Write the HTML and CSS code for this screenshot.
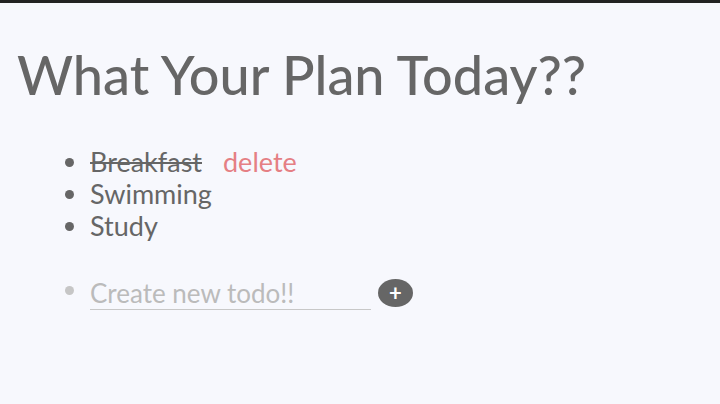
FILE: index.html
```html
<!DOCTYPE html>
<html>
<head>
<meta charset="utf-8">
<link rel="stylesheet" href="styles.css">
</head>
<body>
<div class="topbar"></div>
<main class="app">
  <h1 class="title">What Your Plan Today??</h1>
  <ul class="todos">
    <li class="todo"><span class="done">Breakfast</span><span class="delete">delete</span></li>
    <li class="todo">Swimming</li>
    <li class="todo">Study</li>
  </ul>
  <ul class="todos new">
    <li class="todo new-item"><input class="new-input" type="text" placeholder="Create new todo!!"><button class="add">+</button></li>
  </ul>
</main>
</body>
</html>
```
FILE: styles.css
```css
html, body {
  margin: 0;
  padding: 0;
  background: #f7f8fd;
  width: 720px;
  height: 404px;
  overflow: hidden;
}
body {
  font-family: "Lato", "Noto Sans", sans-serif;
  color: #666;
}
.topbar {
  height: 3px;
  background: #222;
}
.app {
  padding: 0 17px;
}
.title {
  margin: 37px 0 0 0;
  font-size: 54px;
  font-weight: 500;
  line-height: 70px;
  color: #666;
}
.todos {
  margin: 36px 0 0 0;
  padding-left: 73px;
  font-size: 27px;
  line-height: 32px;
}
.todo::marker {
  color: #666;
}
.done {
  text-decoration: line-through;
}
.delete {
  color: #e57f84;
  margin-left: 21px;
}
.new {
  margin-top: 32px;
}
.new .todo::marker {
  color: #c6c6c6;
}
.new-item {
  line-height: 32px;
}
.new-input {
  width: 281px;
  border: none;
  border-bottom: 1px solid #c8c8c8;
  background: transparent;
  font: inherit;
  font-size: 26px;
  color: #666;
  padding: 0;
  outline: none;
  vertical-align: middle;
}
.new-input::placeholder {
  color: #bbb;
}
.add {
  width: 35px;
  height: 28px;
  border-radius: 50%;
  border: none;
  background: #666;
  color: #fff;
  font-size: 22px;
  font-weight: 700;
  line-height: 28px;
  padding: 0;
  margin-left: 7px;
  vertical-align: middle;
  font-family: "Lato", sans-serif;
}
```
